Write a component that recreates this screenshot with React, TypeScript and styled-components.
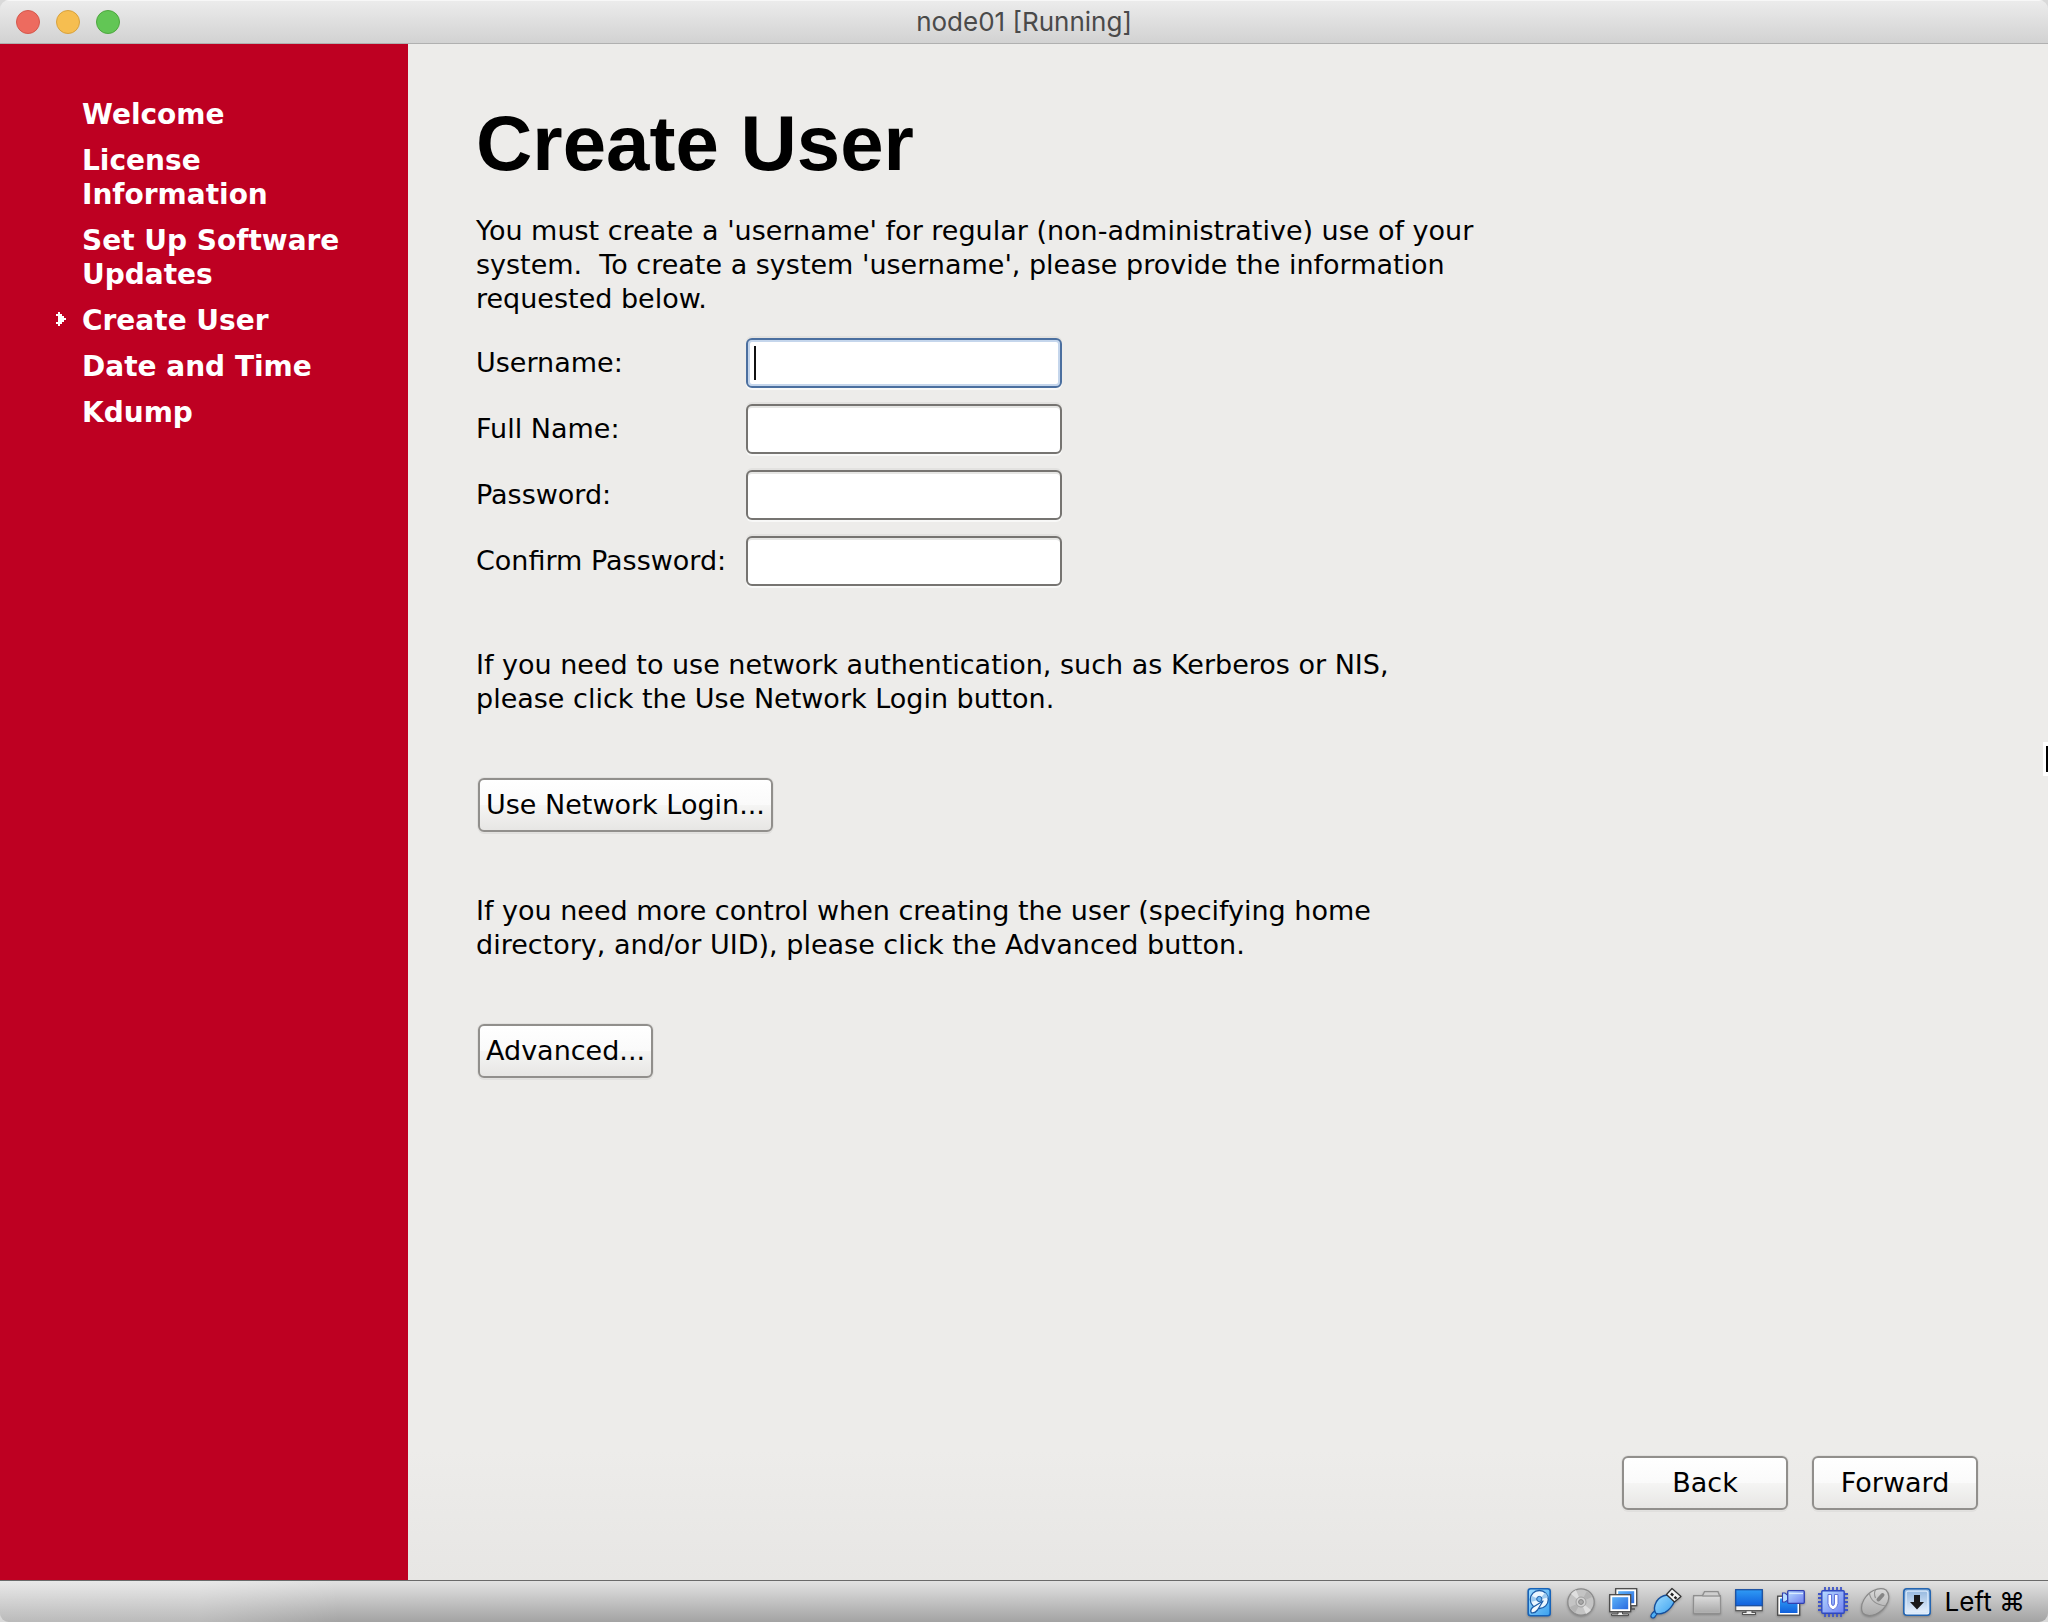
import React, { useState } from "react";
import styled, { createGlobalStyle, css } from "styled-components";

const GlobalStyle = createGlobalStyle`
  *, *::before, *::after { box-sizing: border-box; }
  body {
    margin: 0;
    background: #d9d9d9;
    color: #000;
    font-family: "DejaVu Sans", sans-serif;
    font-size: 27px;
    line-height: 34px;
  }
`;

const systemFont = css`
  font-family: Inter, "DejaVu Sans", sans-serif;
  font-size: 26px;
`;

const Window = styled.div`
  position: relative;
  display: flex;
  flex-direction: column;
  min-height: 100vh;
  overflow: hidden;
  border-radius: 9px;
`;

const TitleBar = styled.header`
  display: grid;
  grid-template-columns: 1fr auto 1fr;
  align-items: center;
  height: 44px;
  padding: 1px 16px 0;
  background: linear-gradient(#ececec, #d2d2d2);
  border-bottom: 1px solid #b0b0b0;
  box-shadow: inset 0 1px 0 #f7f7f7;
`;

const Lights = styled.div`
  display: flex;
  gap: 16px;
`;

const Light = styled.button<{ $fill: string; $edge: string }>`
  width: 24px;
  height: 24px;
  padding: 0;
  border: 1px solid ${(p) => p.$edge};
  border-radius: 50%;
  background: ${(p) => p.$fill};
`;

const WindowTitle = styled.span`
  ${systemFont}
  color: #4a4a4a;
`;

const Body = styled.div`
  display: flex;
  flex: 1;
`;

const Sidebar = styled.nav`
  flex: 0 0 408px;
  padding: 54px 60px 40px 56px;
  background: #be0022;
  color: #fff;
`;

const Steps = styled.ol`
  display: flex;
  flex-direction: column;
  gap: 12px;
  margin: 0;
  padding: 0;
  list-style: none;
  font-size: 28px;
  font-weight: bold;
`;

const Step = styled.li`
  display: grid;
  grid-template-columns: 10px 1fr;
  column-gap: 16px;
`;

const Marker = styled.svg`
  width: 10px;
  height: 34px;
`;

const StepName = styled.span`
  grid-column: 2;
`;

const Content = styled.main`
  display: flex;
  flex: 1;
  flex-direction: column;
  padding: 54px 68px 68px;
  background: linear-gradient(#edecea calc(100% - 130px), #e7e6e4);
`;

const Heading = styled.h1`
  margin: 0 0 26px;
  font-family: "Liberation Sans", Arial, sans-serif;
  font-size: 78px;
  font-weight: bold;
  line-height: 90px;
`;

const Text = styled.p`
  margin: 0;
  white-space: pre-wrap;
`;

const Form = styled.form`
  display: flex;
  flex: 1;
  flex-direction: column;
  align-items: flex-start;
`;

const Fields = styled.div`
  display: grid;
  grid-template-columns: 250px 316px;
  gap: 16px 20px;
  align-items: center;
  margin: 22px 0 62px;
`;

const Label = styled.label`
  white-space: nowrap;
`;

const Input = styled.input`
  width: 100%;
  height: 50px;
  padding: 0 6px;
  border: 2px solid #767471;
  border-radius: 6px;
  outline: none;
  background: #fff;
  box-shadow: 0 -2px 0 #e3e2e0, 0 2px 0 #f8f8f7, inset 0 2px 0 #e6e6e4;
  color: #000;
  font: inherit;
  caret-color: transparent;
`;

const Field = styled.div`
  position: relative;
  display: flex;

  &[data-active="true"] ${Input} {
    border-color: #4b6f9f;
    box-shadow: 0 -2px 0 #e3e2e0, 0 2px 0 #f8f8f7, inset 0 0 0 2px #c5d6ec;
  }

  &[data-active="true"]::after {
    content: "";
    position: absolute;
    top: 8px;
    left: 8px;
    width: 2px;
    height: 34px;
    background: #111;
  }
`;

const Button = styled.button<{ $wide?: boolean }>`
  min-width: ${(p) => (p.$wide ? "166px" : "0")};
  height: 54px;
  margin: 0 2px;
  padding: 0 6px;
  border: 2px solid #918f8c;
  border-radius: 6px;
  background: linear-gradient(#fff, #fafafa 50%, #f5f5f4 50%, #e7e6e4);
  box-shadow: 0 0 0 1px #e2e1df, 0 2px 0 #e0dfdd;
  color: #000;
  font: inherit;
  white-space: nowrap;
`;

const Action = styled.div`
  margin: 62px 0;
`;

const Navigation = styled.div`
  display: flex;
  gap: 20px;
  align-self: flex-end;
  margin: auto 0 2px;
`;

const StatusBar = styled.footer`
  display: flex;
  align-items: center;
  justify-content: flex-end;
  gap: 14px;
  height: 42px;
  padding: 0 23px 0 0;
  border-top: 1px solid #6a6a6a;
  background:
    linear-gradient(to right, rgba(255, 255, 255, 0.25) 200px, rgba(255, 255, 255, 0) 340px),
    linear-gradient(#e2e2e2, #a3a3a3);
`;

const StatusIcon = styled.svg`
  flex: none;
  width: 28px;
  height: 28px;
  overflow: visible;
  filter: drop-shadow(0 1px 1px rgba(0, 0, 0, 0.25));
`;

const HostKey = styled.span`
  ${systemFont}
`;

const Pointer = styled.svg`
  position: absolute;
  top: 738px;
  right: 0;
  width: 6px;
  height: 40px;
`;

const steps = [
  "Welcome",
  "License Information",
  "Set Up Software Updates",
  "Create User",
  "Date and Time",
  "Kdump",
];

const fields = [
  { id: "username", label: "Username:", type: "text" },
  { id: "fullname", label: "Full Name:", type: "text" },
  { id: "password", label: "Password:", type: "password" },
  { id: "confirm", label: "Confirm Password:", type: "password" },
];

const Gradients = () => (
  <defs>
    <linearGradient id="sky" x1="0" y1="0" x2="1" y2="1">
      <stop offset="0" stopColor="#9fdcff" />
      <stop offset="1" stopColor="#3aa0ee" />
    </linearGradient>
    <linearGradient id="screen" x1="0" y1="0" x2="0" y2="1">
      <stop offset="0" stopColor="#2f9bf5" />
      <stop offset="1" stopColor="#1160dc" />
    </linearGradient>
    <linearGradient id="pane" x1="0" y1="0" x2="1" y2="1">
      <stop offset="0" stopColor="#5cb2f8" />
      <stop offset="1" stopColor="#2a6be0" />
    </linearGradient>
    <linearGradient id="indigo" x1="0" y1="0" x2="1" y2="1">
      <stop offset="0" stopColor="#b7dcff" />
      <stop offset="1" stopColor="#6f7ff0" />
    </linearGradient>
    <linearGradient id="grey" x1="0" y1="0" x2="0" y2="1">
      <stop offset="0" stopColor="#dadada" />
      <stop offset="1" stopColor="#a9a9a9" />
    </linearGradient>
    <linearGradient id="key" x1="0" y1="0" x2="0" y2="1">
      <stop offset="0" stopColor="#8fb4dc" />
      <stop offset="1" stopColor="#eef6ff" />
    </linearGradient>
  </defs>
);

const HardDisk = () => (
  <StatusIcon viewBox="0 0 28 28" aria-label="Hard disks">
    <Gradients />
    <rect x="3.2" y="0.7" width="22" height="27" rx="2.5" fill="url(#sky)" stroke="#1763b8" strokeWidth="1.6" />
    <circle cx="14.3" cy="11.5" r="9" fill="#eaf6ff" stroke="#1d5da8" strokeWidth="1.3" />
    <path d="M14.3 11.5 L20 4.8 A9 9 0 0 1 23 9.5 Z M14.3 11.5 L7 8 A9 9 0 0 0 6 14 Z" fill="#9fcbef" />
    <circle cx="14.3" cy="11" r="2.6" fill="#6db4ee" stroke="#1d5da8" />
    <path d="M18 13 L12.5 22 Q10 25.5 6.5 24.8 Q4.6 22.5 7.5 19.5 Z" fill="#f4faff" stroke="#1d5da8" strokeWidth="1.3" strokeLinejoin="round" />
  </StatusIcon>
);

const Disc = () => (
  <StatusIcon viewBox="0 0 28 28" aria-label="Optical drives">
    <circle cx="14" cy="14" r="13.2" fill="#c4c4c4" stroke="#8b8b8b" strokeWidth="1.3" />
    <path d="M14 14 L4 6 A13 13 0 0 1 9 2 Z M14 14 L24 22 A13 13 0 0 1 19 26 Z" fill="#dfdfdf" />
    <path d="M14 14 L20 3 A12 12 0 0 1 25 9 Z M14 14 L8 25 A12 12 0 0 1 3 19 Z" fill="#b3b3b3" />
    <circle cx="14" cy="14" r="5" fill="#d2d2d2" stroke="#a0a0a0" />
    <circle cx="14" cy="14" r="2.4" fill="#aaa" stroke="#858585" />
  </StatusIcon>
);

const Network = () => (
  <StatusIcon viewBox="0 0 28 28" aria-label="Network">
    <path d="M22 18 V21 H26" fill="none" stroke="#555" strokeWidth="1.6" />
    <rect x="6.7" y="0.7" width="21" height="17" fill="#fff" stroke="#4a4a4a" strokeWidth="1.3" />
    <rect x="9.2" y="3.2" width="16" height="12" fill="url(#pane)" />
    <rect x="0.7" y="6.7" width="21" height="17" fill="#fff" stroke="#4a4a4a" strokeWidth="1.3" />
    <rect x="3.2" y="9.2" width="16" height="12" fill="url(#pane)" />
    <path d="M9 24 H13.5 V26 H19.5 V27.6 H2.5 V26 H9 Z" fill="#eee" stroke="#4a4a4a" strokeWidth="1" />
  </StatusIcon>
);

const Usb = () => (
  <StatusIcon viewBox="0 0 28 28" aria-label="USB devices">
    <path d="M4.5 22 L1 25.5 Q-1 28 0.5 29.5 Q3 31 4.5 28 L7 24.5 Z" fill="#4fb0f5" stroke="#144f9c" strokeWidth="1.2" />
    <path d="M16 7 L23.5 13.5 Q20 21 14 24.3 Q8 27 4.5 25 Q2 20 5.5 13.5 Q9 8 16 7 Z" fill="url(#sky)" stroke="#144f9c" strokeWidth="1.4" />
    <path d="M21 0.5 L30 8.5 L23.5 14 L15.5 6.5 Z" fill="#f2f2f2" stroke="#333" strokeWidth="1.2" strokeLinejoin="round" />
    <path d="M20 5.5 l2.2 2 M23.5 8.8 l2 1.8" stroke="#222" strokeWidth="2.4" />
  </StatusIcon>
);

const Folder = () => (
  <StatusIcon viewBox="0 0 28 28" aria-label="Shared folders">
    <path d="M0.7 25.3 V7.7 H9.5 L11.5 3.7 H25 L26.5 7.7 H27.3 V25.3 Z" fill="#cfcfcf" stroke="#8e8e8e" strokeWidth="1.3" />
    <path d="M1.4 9 H26.6 V24.7 H1.4 Z" fill="url(#grey)" />
    <path d="M9.5 8 H27" stroke="#8e8e8e" strokeWidth="1.2" />
  </StatusIcon>
);

const Display = () => (
  <StatusIcon viewBox="0 0 28 28" aria-label="Display">
    <path d="M11 22 H17 V24.5 H20.5 V26.5 H7.5 V24.5 H11 Z" fill="#eee" stroke="#555" strokeWidth="1.1" />
    <path d="M0.7 17 V22.6 H27.3 V17" fill="#f5f5f5" stroke="#5c5c5c" strokeWidth="1.2" />
    <rect x="0.7" y="1.7" width="26.6" height="16" fill="url(#screen)" stroke="#1b4fa0" strokeWidth="1.3" />
  </StatusIcon>
);

const Recording = () => (
  <StatusIcon viewBox="0 0 28 28" aria-label="Recording">
    <rect x="0.7" y="8.2" width="22" height="19" fill="#fff" stroke="#4a4a4a" strokeWidth="1.3" />
    <rect x="3" y="10.5" width="17.5" height="14.5" fill="url(#screen)" />
    <path d="M5.5 5 H8 L11 7.5 V12 L8 14 H5.5 Z" fill="#b7dcff" stroke="#3040b0" strokeWidth="1.1" />
    <rect x="10.7" y="2.7" width="16.6" height="12.6" rx="1" fill="url(#indigo)" stroke="#3040b0" strokeWidth="1.3" />
    <path d="M12 5.5 H26" stroke="#d8ebff" strokeWidth="1.2" />
  </StatusIcon>
);

const Processor = () => (
  <StatusIcon viewBox="0 0 28 28" aria-label="CPU features">
    <path
      d="M6 -1 V29 M10 -1 V29 M14 -1 V29 M18 -1 V29 M22 -1 V29 M-1 6 H29 M-1 10 H29 M-1 14 H29 M-1 18 H29 M-1 22 H29"
      stroke="#3f55c8"
      strokeWidth="1.8"
    />
    <rect x="2.8" y="2.8" width="22.4" height="22.4" rx="1" fill="url(#indigo)" stroke="#2f48c0" strokeWidth="1.4" />
    <path
      d="M9 6.5 H12.5 V15 Q12.5 17.5 14 17.5 Q15.5 17.5 15.5 15 V6.5 H19 V15.5 Q19 19.5 14 22 Q9 19.5 9 15.5 Z"
      fill="#fff"
      stroke="#5668d8"
      strokeWidth="0.9"
    />
  </StatusIcon>
);

const Mouse = () => (
  <StatusIcon viewBox="0 0 28 28" aria-label="Mouse integration">
    <path
      d="M12.5 2.5 Q20 -1 25 2 Q29.5 6.5 26.8 14 Q23 22.5 14.5 26.3 Q5.5 29.5 1.5 24.5 Q-1 18.5 3 11.5 Q7 5 12.5 2.5 Z"
      fill="url(#grey)"
      stroke="#888"
      strokeWidth="1.2"
    />
    <path d="M8.5 5.5 Q10 16 25 18 M14.5 2 Q12.5 5 14.5 10" fill="none" stroke="#909090" strokeWidth="1.1" />
    <path d="M17.5 11.5 L21.5 7" stroke="#858585" strokeWidth="4" strokeLinecap="round" />
  </StatusIcon>
);

const Keyboard = () => (
  <StatusIcon viewBox="0 0 28 28" aria-label="Keyboard capture">
    <rect x="0.8" y="0.8" width="26.4" height="26.4" rx="3" fill="url(#key)" stroke="#2465b0" strokeWidth="1.6" />
    <rect x="3.2" y="3.2" width="21.6" height="21.6" rx="2" fill="none" stroke="#d6e8fa" strokeWidth="1.2" />
    <path d="M11 7 H17 V14 H21 L14 21.5 L7 14 H11 Z" fill="#1a1a1a" />
  </StatusIcon>
);

export default function App() {
  const [active, setActive] = useState("username");

  return (
    <>
      <GlobalStyle />
      <Window>
        <TitleBar>
          <Lights>
            <Light type="button" aria-label="Close" $fill="#ed6b5f" $edge="#d5584c" />
            <Light type="button" aria-label="Minimize" $fill="#f6be50" $edge="#d8a23e" />
            <Light type="button" aria-label="Zoom" $fill="#62c655" $edge="#4ea73f" />
          </Lights>
          <WindowTitle>node01 [Running]</WindowTitle>
        </TitleBar>
        <Body>
          <Sidebar aria-label="Setup steps">
            <Steps>
              {steps.map((name) => (
                <Step key={name} aria-current={name === "Create User" ? "step" : undefined}>
                  {name === "Create User" && (
                    <Marker viewBox="0 0 10 34" aria-hidden="true" shapeRendering="crispEdges">
                      <path d="M2 8 H4 V10 H6 V12 H8 V14 H10 V16 H8 V18 H6 V20 H4 V22 H2 V20 H0 V18 H2 V12 H0 V10 H2 Z" fill="#fff" />
                    </Marker>
                  )}
                  <StepName>{name}</StepName>
                </Step>
              ))}
            </Steps>
          </Sidebar>
          <Content>
            <Heading>Create User</Heading>
            <Form onSubmit={(e) => e.preventDefault()}>
              <Text>
                {"You must create a 'username' for regular (non-administrative) use of your\nsystem.  To create a system 'username', please provide the information\nrequested below."}
              </Text>
              <Fields>
                {fields.map((f) => (
                  <React.Fragment key={f.id}>
                    <Label htmlFor={f.id}>{f.label}</Label>
                    <Field data-active={active === f.id}>
                      <Input id={f.id} type={f.type} onFocus={() => setActive(f.id)} />
                    </Field>
                  </React.Fragment>
                ))}
              </Fields>
              <Text>
                {"If you need to use network authentication, such as Kerberos or NIS,\nplease click the Use Network Login button."}
              </Text>
              <Action>
                <Button type="button">Use Network Login...</Button>
              </Action>
              <Text>
                {"If you need more control when creating the user (specifying home\ndirectory, and/or UID), please click the Advanced button."}
              </Text>
              <Action>
                <Button type="button">Advanced...</Button>
              </Action>
              <Navigation>
                <Button type="button" $wide>Back</Button>
                <Button type="submit" $wide>Forward</Button>
              </Navigation>
            </Form>
          </Content>
        </Body>
        <StatusBar>
          <HardDisk />
          <Disc />
          <Network />
          <Usb />
          <Folder />
          <Display />
          <Recording />
          <Processor />
          <Mouse />
          <Keyboard />
          <HostKey>Left ⌘</HostKey>
        </StatusBar>
        <Pointer viewBox="0 0 6 40" aria-hidden="true">
          <rect x="1" y="4" width="5" height="34" fill="#fff" />
          <rect x="4" y="8" width="2" height="26" fill="#000" />
        </Pointer>
      </Window>
    </>
  );
}
